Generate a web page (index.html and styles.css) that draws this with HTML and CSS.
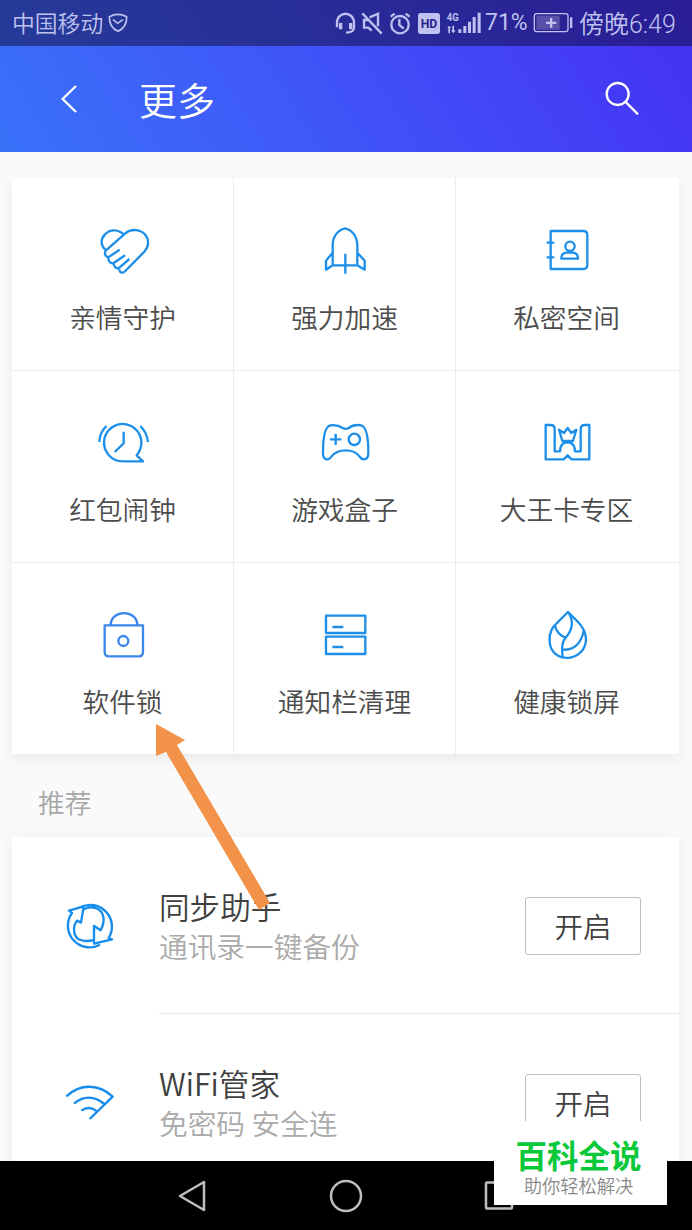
FILE: index.html
```html
<!DOCTYPE html>
<html lang="zh-CN">
<head>
<meta charset="utf-8">
<title>更多</title>
<link rel="stylesheet" href="styles.css">
</head>
<body>
<div class="screen">
  <div class="top">
    <div class="status">
      <span class="carrier">中国移动</span>
      <svg class="shield" width="20" height="20" viewBox="0 0 60 60"><path d="M4 11Q30-3 56 11Q57 42 30 55Q3 42 4 11ZM15 20L29 31L45 20"/></svg>
      <svg class="signals" width="151" height="46" viewBox="24 0 453 138">
        <g class="line">
          <path d="M33 82V69C33 32 84 32 84 69V82Q84 98 60 98"/><path d="M44 69V88M74 69V88" class="thick"/>
          <path d="M109 40L167 101M126 60H114V83H127L137 92M131 52L156 41V79"/>
          <circle cx="222" cy="74" r="26"/><path d="M220 57V75L233 86M194 50L206 41M239 41L251 50"/>
        </g>
        <rect class="solid" x="276" y="39" width="66" height="63" rx="8"/>
        <text class="hd" x="309" y="84" text-anchor="middle" textLength="50" lengthAdjust="spacingAndGlyphs">HD</text>
        <text class="net" x="362" y="63" textLength="36" lengthAdjust="spacingAndGlyphs">4G</text>
        <path class="solid" d="M369 77l7 7h-4v16h-5V84h-3zM379 77h5v14h5l-7 9-7-9h4zM397 88h9v11h-9zM412 78h9v21h-9zM426 65h9v34h-9zM440 51h9v48h-9zM455 38h9v61h-9z"/>
      </svg>
      <span class="percent">71%</span>
      <svg class="battery" width="40" height="46" viewBox="0 0 120 138"><rect class="outline" x="4" y="41" width="101" height="54" rx="7"/><rect class="charge" x="10" y="47" width="70" height="42"/><path class="solid" d="M51 54h7v11h12v7H58v11h-7V72H39v-7h12zM111 52h7v32h-7z"/></svg>
      <span class="clock">傍晚6:49</span>
    </div>
    <div class="header">
      <svg class="back" width="20" height="32" viewBox="0 0 60 96"><path d="M51 9L11 48L51 87"/></svg>
      <h1 class="title">更多</h1>
      <svg class="search" width="38" height="38" viewBox="0 0 114 114"><circle cx="44" cy="42" r="33"/><path d="M68 66L103 101"/></svg>
    </div>
  </div>

  <main class="content">
    <section class="grid">
      <div class="cell"><svg class="icon" viewBox="-4 0 270 210"><path d="M135 61C119 42 92 42 77 58C63 73 63 91 80 106M80 106L138 55C154 41 181 42 196 57C210 73 210 94 195 110L138 168C130 177 120 173 120 163M80 106C74 114 77 125 87 127L121 104M87 127C86 139 94 147 103 144L137 121M103 144C103 156 111 163 120 158L150 132"/></svg><span>亲情守护</span></div>
      <div class="cell"><svg class="icon" viewBox="0 0 270 210"><path d="M98 151V91C98 66 112 45 135 40C158 45 172 66 172 91V151ZM98 113L78 137V164L98 151M172 113L194 137V164L172 151M136 116V176"/></svg><span>强力加速</span></div>
      <div class="cell"><svg class="icon" viewBox="-10 0 270 210"><path d="M76 48H174Q186 48 186 60V150Q186 162 174 162H76ZM64 83H87M64 127H87M108 131Q108 113 125 113H141Q158 113 158 131Z"/><circle cx="134" cy="94" r="14"/></svg><span>私密空间</span></div>
      <div class="cell"><svg class="icon" viewBox="-5 6 270 210"><path d="M190 169H130A56 56 0 1 1 181 134Q178 143 171 151ZM132 80V115L105 141M80 63Q60 83 59 111M182 63Q202 83 205 111"/></svg><span>红包闹钟</span></div>
      <div class="cell"><svg class="icon" viewBox="0 6 270 210"><path d="M91 61C109 58 119 63 128 69Q137 74 146 69C155 62 165 58 183 61C198 64 205 94 205 143C205 166 187 168 179 155C168 140 157 136 137 136C117 136 105 140 94 155C85 168 68 166 69 143C69 94 76 64 91 61ZM90 103H124M107 86V120"/><circle cx="163" cy="103" r="17"/></svg><span>游戏盒子</span></div>
      <div class="cell"><svg class="icon" viewBox="-10 6 270 210"><path d="M61 60H76Q88 60 88 73V139H104Q105 117 119 113H134Q148 117 149 139H166V73Q166 60 178 60H192V163H139L127 151L115 163H61ZM111 108L101 74L116 84L127 69L138 84L153 74L143 108Z"/></svg><span>大王卡专区</span></div>
      <div class="cell"><svg class="icon lock" viewBox="234 -3 270 210"><path d="M314 76H429V156Q429 169 416 169H327Q314 169 314 156ZM332 74C334 28 410 28 412 74"/><circle cx="370" cy="123" r="15"/></svg><span>软件锁</span></div>
      <div class="cell"><svg class="icon" viewBox="0 0 270 210"><path d="M78 50H196V102H78ZM78 113H196V165H78ZM97 84H130M97 144H130"/></svg><span>通知栏清理</span></div>
      <div class="cell"><svg class="icon" viewBox="527 27 270 210"><path d="M665 66L633 98C601 125 602 178 635 197C660 211 692 202 709 180C727 153 719 122 697 98ZM668 70C684 97 678 119 659 142C644 159 647 181 649 201M626 107Q632 133 657 142M712 122C706 159 683 181 649 179"/></svg><span>健康锁屏</span></div>
    </section>

    <h2 class="section-title">推荐</h2>

    <section class="list">
      <div class="item">
        <svg class="item-icon" width="56" height="56" viewBox="187 113 168 168"><path d="M242 141A65 65 0 0 1 327 233L337 237L283 250V197L303 210C317 183 316 152 287 143Q266 137 252 148"/><path d="M301 253A65 65 0 0 1 217 158L208 151L252 138L244 187L232 181C219 197 220 226 237 237Q254 246 283 239"/></svg>
        <div class="copy"><div class="name">同步助手</div><div class="desc">通讯录一键备份</div></div>
        <button class="action">开启</button>
      </div>
      <div class="item">
        <svg class="item-icon" width="56" height="56" viewBox="187 643 168 168"><path d="M200 707C243 667 299 670 339 708L270 775M223 729C251 705 284 705 314 730M245 750Q269 733 292 752"/></svg>
        <div class="copy"><div class="name">WiFi管家</div><div class="desc">免密码 安全连</div></div>
        <button class="action">开启</button>
      </div>
    </section>
  </main>

  <nav class="navbar">
    <svg width="34" height="36" viewBox="0 0 34 36"><path d="M29 4V32L5 18Z"/></svg>
    <svg width="34" height="36" viewBox="0 0 34 36"><circle cx="17" cy="18" r="15"/></svg>
    <svg width="34" height="36" viewBox="0 0 34 36"><rect x="3" y="4.500" width="26" height="26" rx="1"/></svg>
  </nav>

  <svg class="pointer" width="120" height="190" viewBox="0 0 120 190"><path d="M3 1L32 17L24 22L117 180L106 187L13 29L3 33Z"/></svg>
  <div class="badge"><strong>百科全说</strong><span>助你轻松解决</span></div>
</div>
</body>
</html>
```
FILE: styles.css
```css
* { box-sizing: border-box; }
body { margin: 0; font-family: "Noto Sans CJK SC", sans-serif; font-weight: 350; }
svg { display: block; flex: none; fill: none; overflow: visible; }
.screen { position: relative; width: 692px; height: 1230px; overflow: hidden; display: flex; flex-direction: column; background: #fafafa; }

.top { height: 152px; flex: none; background: linear-gradient(58deg, #3a72f9 0%, #3f58f8 40%, #4342f6 72%, #4430f2 100%); }
.status { height: 46px; display: flex; align-items: center; padding-left: 12px; background: rgba(15, 10, 55, .5); color: #bfc1f0; white-space: nowrap; }
.carrier { width: 92px; font-size: 22.800px; line-height: 46px; }
.shield { margin-left: 4px; stroke: #bfc1f0; stroke-width: 5; }
.signals { margin-left: 206px; }
.line { stroke: #bfc1f0; stroke-width: 7; }
.thick { stroke-width: 10; }
.solid { fill: #bfc1f0; }
.hd { fill: #29238a; font: bold 38px Roboto, sans-serif; }
.net { fill: #bfc1f0; font: bold 34px Roboto, sans-serif; }
.percent { width: 48px; font: 400 23px/46px Roboto, sans-serif; }
.outline { stroke: #bfc1f0; stroke-width: 4; }
.charge { fill: #5a50a9; }
.clock { margin-left: 6px; padding-top: 3px; font-family: Roboto, "Noto Sans CJK SC", sans-serif; font-size: 25px; font-weight: 350; line-height: 43px; }

.header { height: 106px; display: flex; align-items: center; padding: 0 51px 0 59px; }
.back { stroke: #fff; stroke-width: 7; }
.title { flex: 1; margin: 0 0 0 60px; color: #fff; font-size: 38px; font-weight: 350; line-height: 56px; }
.search { stroke: #fff; stroke-width: 7; stroke-linecap: round; }

.content { flex: 1; min-height: 0; overflow: hidden; padding: 26px 13px 0 12px; }
.grid { height: 576px; display: grid; grid-template-columns: 222px 222px 1fr; grid-template-rows: 193px 192px 191px; background: #fff; box-shadow: 0 5px 14px rgba(0, 0, 0, .07); }
.cell { display: flex; flex-direction: column; align-items: center; padding-top: 37px; border-right: 1px solid #ececec; border-bottom: 1px solid #ececec; color: #4c4c4c; font-size: 26.700px; line-height: 40px; }
.cell:nth-child(3n) { border-right: 0; padding-right: 2px; }
.cell:nth-child(n + 4) { padding-top: 36px; }
.cell:nth-child(n + 7) { border-bottom: 0; }
.cell span { margin-top: 12px; }
.icon { width: 90px; height: 70px; stroke: #1d8fe8; stroke-width: 7; stroke-linejoin: round; }
.lock { stroke: #3b87ec; }
.section-title { margin: 0; padding: 6px 0 0 26px; height: 83px; color: #a6a6a6; font-size: 26.700px; font-weight: 350; line-height: 83px; }

.list { background: #fff; box-shadow: 0 4px 14px rgba(0, 0, 0, .07); }
.item { position: relative; height: 177px; display: flex; align-items: center; padding: 0 38px 0 50px; }
.item:first-child { background: linear-gradient(#eaeaea, #eaeaea) 147px 100% / 520px 1px no-repeat; }
.item-icon { stroke: #168cec; stroke-width: 7; stroke-linejoin: round; }
.copy { flex: 1; margin: 1px 0 0 41px; }
.name { color: #404040; font-size: 30.600px; line-height: 40px; }
.desc { color: #aaa; font-size: 28.700px; line-height: 40px; }
.action { width: 116px; height: 58px; padding: 0; border: 1px solid #bfbfbf; border-radius: 3px; background: #fff; color: #404040; font: 350 28.500px/55px "Noto Sans CJK SC", sans-serif; }

.navbar { height: 69px; flex: none; display: flex; align-items: center; justify-content: center; gap: 120px; background: #000; }
.navbar svg { stroke: #bebebe; stroke-width: 2.500; stroke-linejoin: round; }
.pointer { position: absolute; left: 153px; top: 723px; fill: #f29349; }
.badge { position: absolute; left: 494px; top: 1121px; width: 173px; height: 84px; padding-top: 13px; display: flex; flex-direction: column; align-items: center; background: #fff; }
.badge strong { color: #09c83a; font-size: 31.500px; font-weight: 700; line-height: 40px; padding-right: 4px; }
.badge span { color: #888; font-size: 18.300px; line-height: 22px; padding-right: 4px; }
```
